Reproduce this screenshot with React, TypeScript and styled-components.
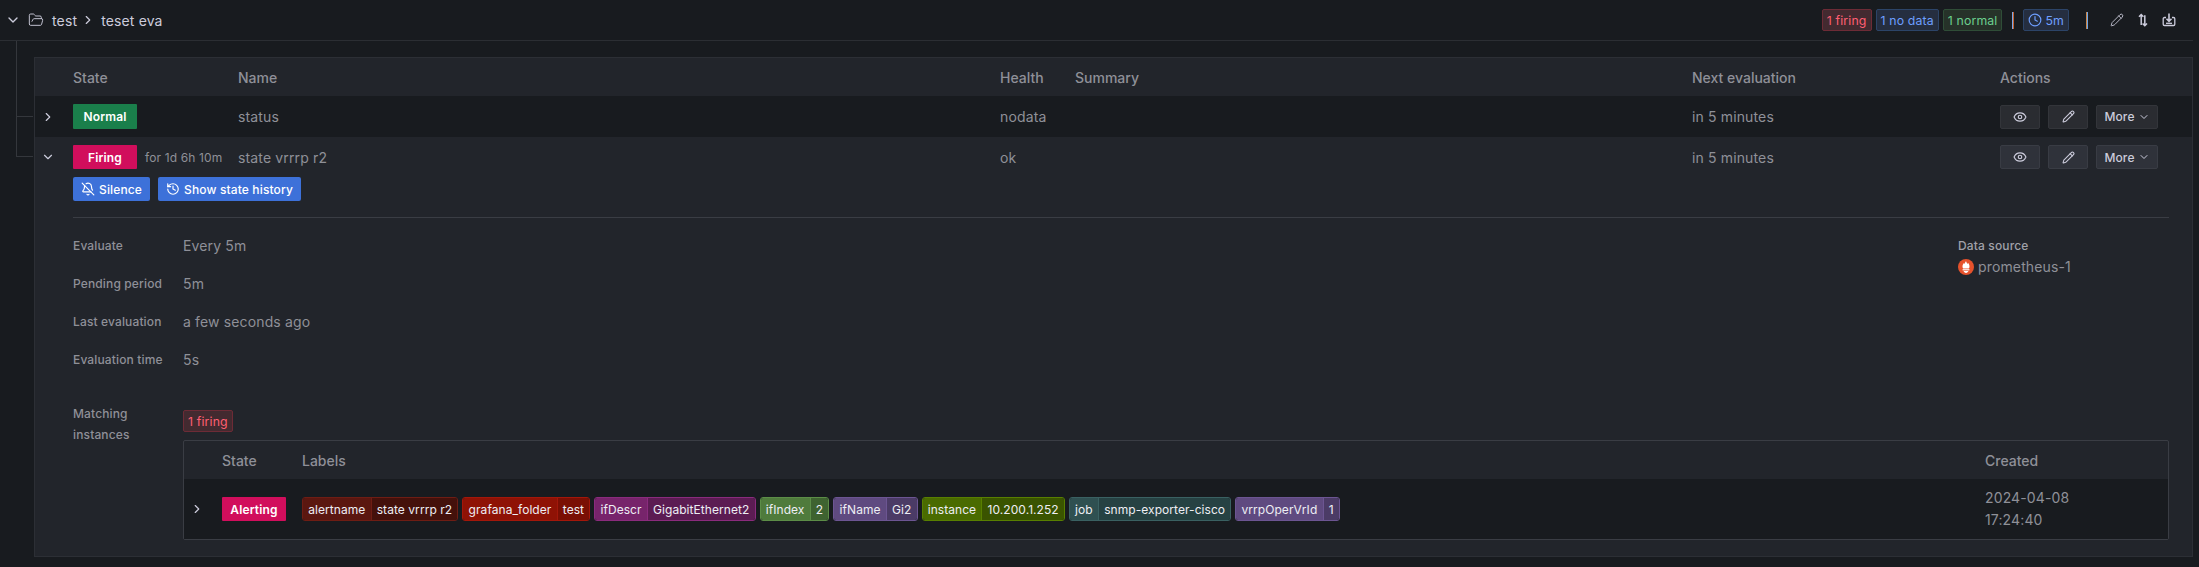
import React from "react"
import styled, { createGlobalStyle } from "styled-components";
import { BellOff, ChevronDown, ChevronRight, Clock, Eye, FolderOpen, History, Pencil } from "lucide-react";

const GlobalStyle = createGlobalStyle`
    html, body {
        margin: 0;
        padding: 0;
        background: #181b1f;
    }
    body {
        font-family: Inter, "Liberation Sans", sans-serif;
        font-size: 14px;
        letter-spacing: 0.01em;
        color: #ccccdc;
    }
`;

const Page = styled.div`
    width: 2199px;
    height: 567px;
    overflow: hidden;
    box-sizing: border-box;
    padding-right: 6px;
`;

const TopBar = styled.div`
    height: 41px;
    box-sizing: border-box;
    border-bottom: 1px solid #2b2e33;
    display: flex;
    align-items: center;
    padding-left: 5px;
    padding-right: 16px;
`;

const Crumbs = styled.div`
    display: flex;
    align-items: center;
    color: #ccccdc;
    flex: 1;
    font-size: 14px;
`;

const FolderSlot = styled.span`
    display: flex;
    margin-left: 7px;
    margin-right: 8px;
`;

const CrumbSep = styled.span`
    display: flex;
    margin: 0 6px 0 4px;
`;

const Stat = styled.span<{ $tone: "red" | "blue" | "green" }>`
    height: 22px;
    box-sizing: border-box;
    display: inline-flex;
    align-items: center;
    gap: 3px;
    padding: 0 4px;
    margin-right: 4px;
    font-size: 12.3px;
    border-radius: 2px;
    border: 1px solid ${p => p.$tone === "red" ? "#6d2b36" : p.$tone === "blue" ? "#2c4468" : "#2f4d37"};
    background: ${p => p.$tone === "red" ? "#432a30" : p.$tone === "blue" ? "#252e40" : "#263229"};
    color: ${p => p.$tone === "red" ? "#ff5f72" : p.$tone === "blue" ? "#6e9fff" : "#6ccf8e"};
`;

const Divider = styled.span<{ $gap: number; $right: number; $left: string; $other: string }>`
    width: 2px;
    height: 17px;
    margin-left: ${p => p.$gap}px;
    margin-right: ${p => p.$right}px;
    background: linear-gradient(90deg, ${p => p.$left} 50%, ${p => p.$other} 50%);
`;

const BarIcon = styled.span<{ $right: number }>`
    display: flex;
    margin-right: ${p => p.$right}px;
    color: #ccccdc;
`;

const Body = styled.div`
    display: flex;
`;

const Gutter = styled.div`
    width: 34px;
    flex: none;
`;

const TreeStub = styled.div<{ $height: number }>`
    width: 17px;
    margin-left: 16px;
    height: ${p => p.$height}px;
    box-sizing: border-box;
    border-left: 1px solid #34373c;
    border-bottom: 1px solid #34373c;
`;

const Panel = styled.div`
    flex: 1;
    height: 500px;
    margin-top: 16px;
    box-sizing: border-box;
    background: #22252b;
    border: 1px solid #2c2f35;
`;

const TableRow = styled.div<{ $dark?: boolean }>`
    display: grid;
    grid-template-columns: 38px 165px 762px 75px 617px 308px 1fr;
    align-items: center;
    background: ${p => p.$dark ? "#181b1f" : "transparent"};
    height: ${p => p.$dark ? "41px" : "38px"};
`;

const ExpandedTop = styled.div`
    display: grid;
    grid-template-columns: 38px 165px 762px 75px 617px 308px 1fr;
    align-items: center;
    height: 24px;
    margin-top: 8px;
`;

const HeadCell = styled.div`
    color: #8f9098;
    font-weight: 500;
    font-size: 14px;
    letter-spacing: 0;
`;

const Cell = styled.div`
    color: #8f9098;
    font-size: 14px;
`;

const ChevronCell = styled.div`
    display: flex;
    justify-content: flex-start;
    padding-left: 6px;
    color: #ccccdc;
`;

const StateCell = styled.div`
    display: flex;
    align-items: center;
    gap: 8px;
`;

const StateBadge = styled.span<{ $tone: "green" | "pink"; $tall?: boolean }>`
    width: 64px;
    height: ${p => p.$tall ? "25px" : "24px"};
    display: inline-flex;
    align-items: center;
    justify-content: center;
    border-radius: 1px;
    font-size: 12px;
    font-weight: 600;
    color: #fff;
    background: ${p => p.$tone === "green" ? "#1a7f4b" : "#d10e5c"};
`;

const Since = styled.span`
    font-size: 12px;
    color: #8f9098;
    white-space: nowrap;
`;

const Actions = styled.div`
    display: flex;
    gap: 8px;
`;

const ActionButton = styled.span<{ $raised?: boolean; $wide?: boolean }>`
    height: 24px;
    width: ${p => p.$wide ? "62px" : "40px"};
    box-sizing: border-box;
    display: inline-flex;
    align-items: center;
    justify-content: center;
    gap: 3px;
    font-size: 12px;
    font-weight: 500;
    border-radius: 2px;
    color: #ccccdc;
    background: ${p => p.$raised ? "#2f323a" : "#2a2c31"};
    border: 1px solid ${p => p.$raised ? "#393c44" : "#33353a"};
`;

const Expanded = styled.div`
    padding: 8px 23px 0 38px;
`;

const PrimaryRow = styled.div`
    display: flex;
    gap: 8px;
`;

const PrimaryButton = styled.span`
    height: 24px;
    padding: 0 8px;
    display: inline-flex;
    align-items: center;
    gap: 4px;
    border-radius: 2px;
    font-size: 12px;
    font-weight: 500;
    color: #fff;
    background: #3d71d9;
`;

const Rule = styled.div`
    height: 1px;
    background: #3a3d44;
    margin-top: 16px;
`;

const Details = styled.div`
    display: flex;
    justify-content: space-between;
    padding-top: 8px;
    height: 185px;
    box-sizing: border-box;
`;

const DetailList = styled.div`
    display: flex;
    flex-direction: column;
`;

const DetailRow = styled.div`
    display: flex;
    align-items: center;
    height: 38px;
    flex: none;
`;

const DetailLabel = styled.div`
    width: 110px;
    flex: none;
    font-size: 12px;
    font-weight: 500;
    color: #8f9098;
`;

const DetailValue = styled.div`
    color: #8f9098;
    font-size: 14px;
`;

const Source = styled.div`
    width: 211px;
    padding-top: 11px;
`;

const SourceLabel = styled.div`
    font-size: 12px;
    font-weight: 500;
    color: #a0a1a9;
    height: 18px;
    line-height: 18px;
`;

const SourceName = styled.div`
    display: flex;
    align-items: center;
    gap: 4px;
    color: #8f9098;
    margin-top: 3px;
`;

const Matching = styled.div`
    display: flex;
`;

const MatchingLabel = styled.div`
    width: 110px;
    flex: none;
    font-size: 12px;
    font-weight: 500;
    line-height: 21px;
    color: #8f9098;
`;

const MatchingBody = styled.div`
    flex: 1;
    display: flex;
    flex-direction: column;
    align-items: flex-start;
    padding-top: 7px;
`;

const InnerTable = styled.div`
    margin-top: 8px;
    align-self: stretch;
    border: 1px solid #3a3d44;
    border-radius: 2px;
`;

const InnerRow = styled.div<{ $dark?: boolean }>`
    display: grid;
    grid-template-columns: 38px 80px 1683px 1fr;
    align-items: center;
    height: ${p => p.$dark ? "60px" : "38px"};
    background: ${p => p.$dark ? "#181b1f" : "transparent"};
`;

const Created = styled.div`
    color: #8f9098;
    font-size: 14px;
    line-height: 22px;
`;

const Labels = styled.div`
    display: flex;
    gap: 4px;
`;

const LabelChip = styled.span<{ $key: string; $val: string; $line: string }>`
    display: inline-flex;
    height: 24px;
    box-sizing: border-box;
    border: 1px solid ${p => p.$line};
    border-radius: 3px;
    overflow: hidden;
    font-size: 12px;
    letter-spacing: 0.005em;
    color: #eeeef4;
    & > span {
        display: flex;
        align-items: center;
        padding: 0 5.2px;
    }
    & > span:first-child {
        background: ${p => p.$key};
        border-right: 1px solid ${p => p.$line};
    }
    & > span:last-child {
        background: ${p => p.$val};
    }
`;

const labelData = [
    { k: "alertname", v: "state vrrrp r2", key: "#5b1710", val: "#44110b", line: "#6e1d14" },
    { k: "grafana_folder", v: "test", key: "#8f1205", val: "#7a0f04", line: "#a3170a" },
    { k: "ifDescr", v: "GigabitEthernet2", key: "#77246b", val: "#5c1c53", line: "#8a2b7d" },
    { k: "ifIndex", v: "2", key: "#4f7b3c", val: "#3e6330", line: "#5c8d47" },
    { k: "ifName", v: "Gi2", key: "#5f4a80", val: "#4b3b66", line: "#6c5592" },
    { k: "instance", v: "10.200.1.252", key: "#4a6b00", val: "#3a5400", line: "#587f00" },
    { k: "job", v: "snmp-exporter-cisco", key: "#2f5051", val: "#264243", line: "#3a6162" },
    { k: "vrrpOperVrId", v: "1", key: "#5f4a80", val: "#4b3b66", line: "#6c5592" },
];

const PrometheusLogo = () => (
    <svg width="16" height="16" viewBox="0 0 16 16">
        <circle cx="8" cy="8" r="8" fill="#e6522c" />
        <path d="M8 2c.4 1.600 1.200 1.900 1.300 3 .5-.3.6-.8.6-1.200 1 1 1.600 2.200 1.600 3.600 0 .9-.3 1.600-.7 2.100H5.200c-.4-.5-.7-1.200-.7-2.100 0-1.400.8-2.200 1.400-3.300.2.4.3.8.6 1C6.600 3.900 7.600 3.200 8 2z" fill="#fff" />
        <rect x="4.600" y="10.200" width="6.800" height="1.200" fill="#fff" />
        <path d="M5.600 12h4.800c-.2 1.100-1.200 1.900-2.400 1.900S5.800 13.100 5.600 12z" fill="#fff" />
    </svg>
);

const SwapIcon = () => (
    <svg width="16" height="16" viewBox="0 0 16 16" fill="none" stroke="currentColor" strokeWidth="1.5">
        <path d="M6.200 13V2.500M4 4.800 6.200 2.500 8.400 4.800" />
        <path d="M9.800 3.200V13.700M7.600 11.400 9.800 13.700 12 11.400" />
    </svg>
);

const ImportIcon = () => (
    <svg width="16" height="16" viewBox="0 0 16 16" fill="none" stroke="currentColor" strokeWidth="1.300">
        <path d="M5 5.500H3.500c-.8 0-1.300.5-1.300 1.300v5.400c0 .8.5 1.300 1.300 1.300h9c.8 0 1.300-.5 1.300-1.300V6.800c0-.8-.5-1.300-1.300-1.300H11" />
        <path d="M8 1.500v7.500M5.500 6.800 8 9.300l2.500-2.500" strokeWidth="1.600" />
        <path d="M5 11.300h6" />
    </svg>
);

const App = () => {
    return (
        <Page>
            <GlobalStyle />
            <TopBar>
                <Crumbs>
                    <ChevronDown size={16} />
                    <FolderSlot><FolderOpen size={16} strokeWidth={1.4} /></FolderSlot>
                    <span>test</span>
                    <CrumbSep><ChevronRight size={14} /></CrumbSep>
                    <span>teset eva</span>
                </Crumbs>
                <Stat $tone="red">1 firing</Stat>
                <Stat $tone="blue">1 no data</Stat>
                <Stat $tone="green">1 normal</Stat>
                <Divider $gap={6} $right={9} $left="#7aa7e8" $other="#c4622d" />
                <Stat $tone="blue"><Clock size={14} />5m</Stat>
                <Divider $gap={13} $right={22} $left="#c9874a" $other="#6ea6e8" />
                <BarIcon $right={11}><Pencil size={14} strokeWidth={1.5} /></BarIcon>
                <BarIcon $right={10}><SwapIcon /></BarIcon>
                <BarIcon $right={0}><ImportIcon /></BarIcon>
            </TopBar>
            <Body>
                <Gutter>
                    <TreeStub $height={76} />
                    <TreeStub $height={40} />
                </Gutter>
                <Panel>
                    <TableRow>
                        <span />
                        <HeadCell>State</HeadCell>
                        <HeadCell>Name</HeadCell>
                        <HeadCell>Health</HeadCell>
                        <HeadCell>Summary</HeadCell>
                        <HeadCell>Next evaluation</HeadCell>
                        <HeadCell>Actions</HeadCell>
                    </TableRow>
                    <TableRow $dark>
                        <ChevronCell><ChevronRight size={14} /></ChevronCell>
                        <StateCell><StateBadge $tone="green" $tall>Normal</StateBadge></StateCell>
                        <Cell>status</Cell>
                        <Cell>nodata</Cell>
                        <Cell />
                        <Cell>in 5 minutes</Cell>
                        <Actions>
                            <ActionButton><Eye size={14} /></ActionButton>
                            <ActionButton><Pencil size={13} /></ActionButton>
                            <ActionButton $wide>More<ChevronDown size={12} /></ActionButton>
                        </Actions>
                    </TableRow>
                    <ExpandedTop>
                        <ChevronCell><ChevronDown size={14} /></ChevronCell>
                        <StateCell>
                            <StateBadge $tone="pink">Firing</StateBadge>
                            <Since>for 1d 6h 10m</Since>
                        </StateCell>
                        <Cell>state vrrrp r2</Cell>
                        <Cell>ok</Cell>
                        <Cell />
                        <Cell>in 5 minutes</Cell>
                        <Actions>
                            <ActionButton $raised><Eye size={14} /></ActionButton>
                            <ActionButton $raised><Pencil size={13} /></ActionButton>
                            <ActionButton $raised $wide>More<ChevronDown size={12} /></ActionButton>
                        </Actions>
                    </ExpandedTop>
                    <Expanded>
                        <PrimaryRow>
                            <PrimaryButton><BellOff size={14} />Silence</PrimaryButton>
                            <PrimaryButton><History size={14} />Show state history</PrimaryButton>
                        </PrimaryRow>
                        <Rule />
                        <Details>
                            <DetailList>
                                <DetailRow><DetailLabel>Evaluate</DetailLabel><DetailValue>Every 5m</DetailValue></DetailRow>
                                <DetailRow><DetailLabel>Pending period</DetailLabel><DetailValue>5m</DetailValue></DetailRow>
                                <DetailRow><DetailLabel>Last evaluation</DetailLabel><DetailValue>a few seconds ago</DetailValue></DetailRow>
                                <DetailRow><DetailLabel>Evaluation time</DetailLabel><DetailValue>5s</DetailValue></DetailRow>
                            </DetailList>
                            <Source>
                                <SourceLabel>Data source</SourceLabel>
                                <SourceName><PrometheusLogo />prometheus-1</SourceName>
                            </Source>
                        </Details>
                        <Matching>
                            <MatchingLabel>Matching<br />instances</MatchingLabel>
                            <MatchingBody>
                                <Stat $tone="red">1 firing</Stat>
                                <InnerTable>
                                    <InnerRow>
                                        <span />
                                        <HeadCell>State</HeadCell>
                                        <HeadCell>Labels</HeadCell>
                                        <HeadCell>Created</HeadCell>
                                    </InnerRow>
                                    <InnerRow $dark>
                                        <ChevronCell><ChevronRight size={14} /></ChevronCell>
                                        <StateCell><StateBadge $tone="pink">Alerting</StateBadge></StateCell>
                                        <Labels>
                                            {labelData.map(l => (
                                                <LabelChip key={l.k} $key={l.key} $val={l.val} $line={l.line}>
                                                    <span>{l.k}</span>
                                                    <span>{l.v}</span>
                                                </LabelChip>
                                            ))}
                                        </Labels>
                                        <Created>2024-04-08<br />17:24:40</Created>
                                    </InnerRow>
                                </InnerTable>
                            </MatchingBody>
                        </Matching>
                    </Expanded>
                </Panel>
            </Body>
        </Page>
    )
}

export default App
